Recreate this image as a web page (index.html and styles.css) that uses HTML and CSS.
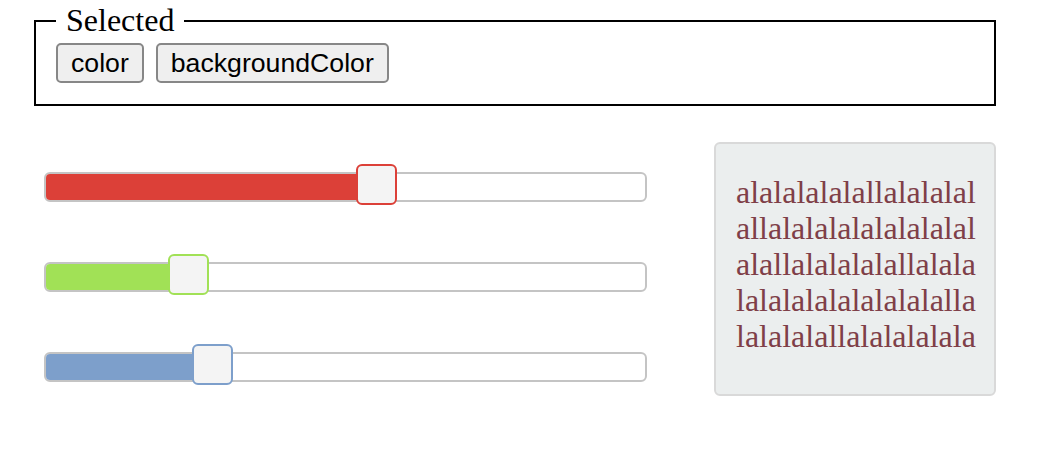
FILE: index.html
```html
<!DOCTYPE html>
<html>
<head>
<meta charset="utf-8">
<link rel="stylesheet" href="styles.css">
</head>
<body>
<div class="page">
  <fieldset class="selected">
    <legend class="selected-legend">Selected</legend>
    <div class="chips">
      <button class="chip">color</button>
      <button class="chip">backgroundColor</button>
    </div>
  </fieldset>
  <div class="main">
    <div class="sliders">
      <div class="slider red">
        <div class="track">
          <div class="fill" style="width: 330px"></div>
          <div class="thumb" style="left: 310px"></div>
        </div>
      </div>
      <div class="slider green">
        <div class="track">
          <div class="fill" style="width: 142px"></div>
          <div class="thumb" style="left: 122px"></div>
        </div>
      </div>
      <div class="slider blue">
        <div class="track">
          <div class="fill" style="width: 166px"></div>
          <div class="thumb" style="left: 146px"></div>
        </div>
      </div>
    </div>
    <div class="preview">
      <div class="preview-text">alalalalalallalalalalallalalalalalalalalalalallalalalalallalalalalalalalalalalalallalalalalallalalalalala</div>
    </div>
  </div>
</div>
</body>
</html>
```

FILE: styles.css
```css
html, body {
  margin: 0;
  padding: 0;
  background: #ffffff;
}

.page {
  padding: 2px 42px 0 34px;
}

.selected {
  margin: 0;
  border: 2px solid #000000;
  padding: 4px 20px 21px 20px;
  min-width: 0;
}

.selected-legend {
  font-family: "Liberation Serif", "Times New Roman", serif;
  font-size: 32px;
  line-height: 37px;
  padding: 0 10px 0 10px;
  color: #000000;
}

.chips {
  display: flex;
  gap: 12px;
}

.chip {
  box-sizing: border-box;
  height: 40px;
  padding: 0 13px;
  margin: 0;
  font-family: "Liberation Sans", Arial, sans-serif;
  font-size: 26.67px;
  color: #000000;
  background: #efefef;
  border: 2px solid #878787;
  border-radius: 5px;
}

.main {
  display: flex;
  align-items: flex-start;
  margin-top: 36px;
}

.sliders {
  width: 603px;
  margin-left: 10px;
  padding-top: 21px;
  display: flex;
  flex-direction: column;
  gap: 49px;
}

.slider {
  height: 41px;
}

.track {
  position: relative;
  box-sizing: border-box;
  margin-top: 9px;
  height: 30px;
  border: 2px solid #c4c4c4;
  border-radius: 6px;
  background: #ffffff;
}

.fill {
  position: absolute;
  left: 0;
  top: 0;
  bottom: 0;
  border-radius: 4px;
}

.thumb {
  position: absolute;
  top: -10px;
  box-sizing: border-box;
  width: 41px;
  height: 41px;
  border: 2px solid;
  border-radius: 6px;
  background: #f4f4f4;
}

.red .fill { background: #dc4038; }
.red .thumb { border-color: #dc4038; }
.green .fill { background: #a1e156; }
.green .thumb { border-color: #a1e156; }
.blue .fill { background: #7d9fcb; }
.blue .thumb { border-color: #7d9fcb; }

.preview {
  box-sizing: border-box;
  margin-left: 67px;
  width: 282px;
  height: 254px;
  padding: 30px 14px 0 20px;
  background: #ebeeee;
  border: 2px solid #d9d9d9;
  border-radius: 6px;
}

.preview-text {
  font-family: "Liberation Serif", "Times New Roman", serif;
  font-size: 32px;
  line-height: 36px;
  color: #7f3f48;
  word-break: break-all;
}
```
